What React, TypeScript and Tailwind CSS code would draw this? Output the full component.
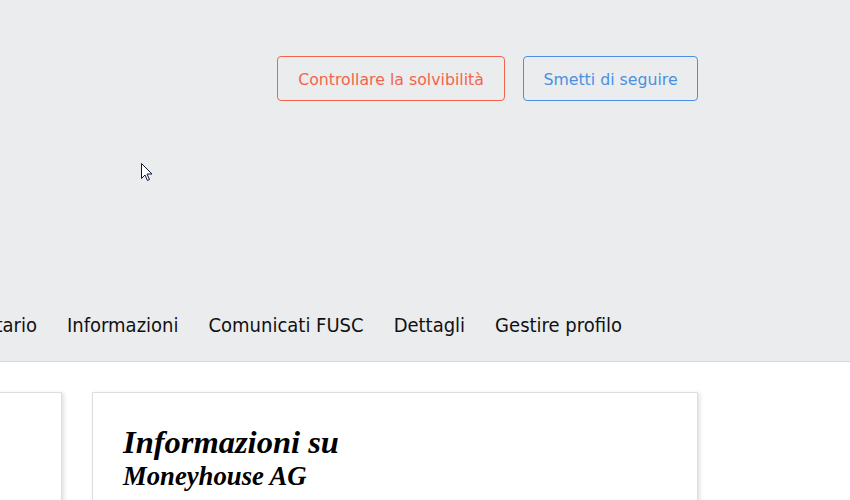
import { ReactNode } from "react";

const sans = { fontFamily: '"DejaVu Sans", "Noto Sans", sans-serif' };
const navFont = { fontFamily: '"DejaVu Sans Condensed", "DejaVu Sans", sans-serif' };
const serif = { fontFamily: '"Liberation Serif", serif' };

const NavItem = ({ children }: { children: ReactNode }) => (
    <span className="whitespace-nowrap">{children}</span>
)

const App = () => {
    return (
        <div className="relative w-[850px] h-[500px] overflow-hidden bg-white" style={sans}>
            <div className="bg-[#ebecee] border-b border-[#d3d6da] h-[362px] flex flex-col">
                <div className="flex gap-[18px] pl-[277px] pt-[56px]">
                    <button className="h-[45px] w-[228px] rounded-[4px] border border-[#f4644c] text-[#f4644c] text-[15.75px] pt-[2px]">
                        Controllare la solvibilità
                    </button>
                    <button className="h-[45px] w-[175px] rounded-[4px] border border-[#4a90e2] text-[#4a90e2] text-[15.75px] pt-[2px]">
                        Smetti di seguire
                    </button>
                </div>
                <div className="mt-auto mb-[21px] flex items-center gap-[30px] text-[20px] text-[#111]" style={navFont}>
                    <div className="w-[37px] overflow-hidden flex justify-end">
                        <NavItem>Inventario</NavItem>
                    </div>
                    <NavItem>Informazioni</NavItem>
                    <NavItem>Comunicati FUSC</NavItem>
                    <NavItem>Dettagli</NavItem>
                    <NavItem>Gestire profilo</NavItem>
                </div>
            </div>

            <div className="flex gap-[30px] pt-[30px] ml-[-200px]">
                <div className="w-[262px] h-[200px] bg-white border border-[#dcdfe2] shadow-[2px_1px_4px_rgba(0,0,0,0.12)]" />
                <div className="w-[606px] h-[200px] bg-white border border-[#dcdfe2] shadow-[2px_1px_4px_rgba(0,0,0,0.12)] px-[30px] pt-[32px]">
                    <h2 className="italic font-bold text-[32.5px] leading-[34px] text-black" style={serif}>
                        Informazioni su
                    </h2>
                    <h3 className="italic font-bold text-[26.7px] leading-[34px] text-black" style={serif}>
                        Moneyhouse AG
                    </h3>
                </div>
            </div>

            <svg className="absolute left-[141px] top-[163px]" width="13" height="20" viewBox="0 0 13 20">
                <path d="M0.5 0.5 L0.5 15.5 L4 12 L6.5 17.5 L8.5 16.5 L6 11 L11 11 Z" fill="white" stroke="#0b1a3a" strokeWidth="1" />
            </svg>
        </div>
    )
}

export default App;
